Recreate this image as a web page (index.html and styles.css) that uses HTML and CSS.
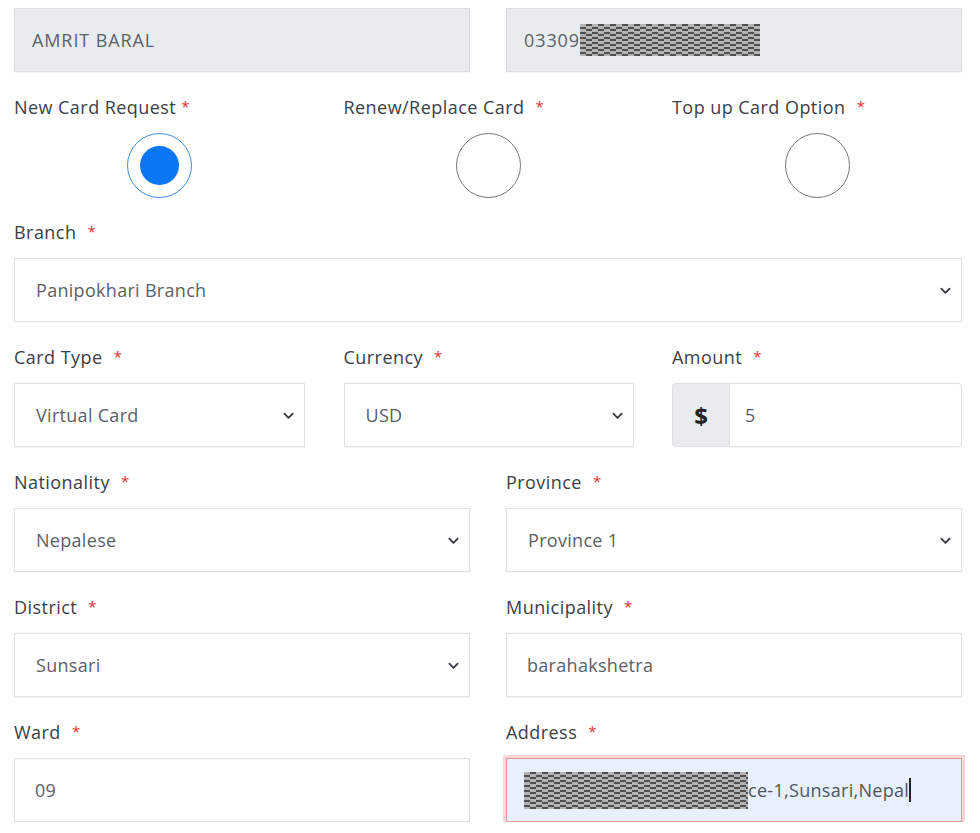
FILE: index.html
```html
<!DOCTYPE html>
<html lang="en">
<head>
<meta charset="utf-8">
<title>Card Request</title>
<link rel="stylesheet" href="styles.css">
</head>
<body>
<form class="form">
  <div class="row two">
    <div class="field"><div class="control readonly">AMRIT BARAL</div></div>
    <div class="field"><div class="control readonly">03309<span class="redact redact-phone"></span></div></div>
  </div>

  <div class="row three">
    <div class="field">
      <label class="label">New Card Request<span class="req tight">*</span></label>
      <div class="radio-wrap"><span class="radio checked"><span class="dot"></span></span></div>
    </div>
    <div class="field">
      <label class="label">Renew/Replace Card <span class="req">*</span></label>
      <div class="radio-wrap"><span class="radio"></span></div>
    </div>
    <div class="field">
      <label class="label">Top up Card Option <span class="req">*</span></label>
      <div class="radio-wrap"><span class="radio"></span></div>
    </div>
  </div>

  <div class="row one">
    <div class="field">
      <label class="label">Branch <span class="req">*</span></label>
      <div class="control select">Panipokhari Branch<svg class="chev" viewBox="0 0 12 8"><path d="M1.5 1.5 L6 6 L10.5 1.5"/></svg></div>
    </div>
  </div>

  <div class="row three">
    <div class="field">
      <label class="label">Card Type <span class="req">*</span></label>
      <div class="control select">Virtual Card<svg class="chev" viewBox="0 0 12 8"><path d="M1.5 1.5 L6 6 L10.5 1.5"/></svg></div>
    </div>
    <div class="field">
      <label class="label">Currency <span class="req">*</span></label>
      <div class="control select">USD<svg class="chev" viewBox="0 0 12 8"><path d="M1.5 1.5 L6 6 L10.5 1.5"/></svg></div>
    </div>
    <div class="field">
      <label class="label">Amount <span class="req">*</span></label>
      <div class="group">
        <span class="addon">$</span>
        <div class="control in-group">5</div>
      </div>
    </div>
  </div>

  <div class="row two">
    <div class="field">
      <label class="label">Nationality <span class="req">*</span></label>
      <div class="control select">Nepalese<svg class="chev" viewBox="0 0 12 8"><path d="M1.5 1.5 L6 6 L10.5 1.5"/></svg></div>
    </div>
    <div class="field">
      <label class="label">Province <span class="req">*</span></label>
      <div class="control select">Province 1<svg class="chev" viewBox="0 0 12 8"><path d="M1.5 1.5 L6 6 L10.5 1.5"/></svg></div>
    </div>
  </div>

  <div class="row two">
    <div class="field">
      <label class="label">District <span class="req">*</span></label>
      <div class="control select">Sunsari<svg class="chev" viewBox="0 0 12 8"><path d="M1.5 1.5 L6 6 L10.5 1.5"/></svg></div>
    </div>
    <div class="field">
      <label class="label">Municipality <span class="req">*</span></label>
      <div class="control">barahakshetra</div>
    </div>
  </div>

  <div class="row two">
    <div class="field">
      <label class="label">Ward <span class="req">*</span></label>
      <div class="control">09</div>
    </div>
    <div class="field">
      <label class="label">Address <span class="req">*</span></label>
      <div class="control focused"><span class="redact redact-addr"></span>ce-1,Sunsari,Nepal<span class="caret"></span></div>
    </div>
  </div>
</form>
</body>
</html>
```

FILE: styles.css
```css
* { box-sizing: border-box; }

html, body {
  margin: 0;
  padding: 0;
  background: #ffffff;
}

body {
  font-family: "Open Sans", "Noto Sans", sans-serif;
  color: #3b4148;
}

.form {
  width: 948px;
  margin-left: 14px;
  padding-top: 8px;
  display: flex;
  flex-direction: column;
  gap: 22px;
}

.row {
  display: grid;
}

.row.two {
  grid-template-columns: 456px 456px;
  column-gap: 36px;
}

.row.three {
  grid-template-columns: 291px 290px 290px;
  column-gap: 38px;
  justify-content: space-between;
}

.row.one {
  grid-template-columns: 1fr;
}

.field {
  display: flex;
  flex-direction: column;
  gap: 12px;
}

.label {
  font-size: 18px;
  line-height: 27px;
  height: 27px;
  margin-top: -1px;
  margin-bottom: 1px;
  letter-spacing: 0.45px;
  color: #3a4047;
  white-space: nowrap;
}

.req {
  color: #e0302f;
  margin-left: 6px;
  font-size: 15px;
  vertical-align: 2px;
}

.req.tight {
  margin-left: 5px;
}

.control {
  position: relative;
  height: 64px;
  border: 1px solid #dfe2e5;
  background: #ffffff;
  padding: 0 20px;
  display: flex;
  align-items: center;
  font-size: 18px;
  letter-spacing: 0.3px;
  color: #5b6168;
  box-shadow: 0 1px 1px rgba(0, 0, 0, 0.04);
}

.control.readonly {
  background: #e9ecef;
  padding-left: 17px;
  border-color: #dcdfe2;
  letter-spacing: 0.9px;
}

.control.select {
  padding-left: 21px;
}

.chev {
  position: absolute;
  right: 10px;
  top: 28px;
  width: 11px;
  height: 8px;
  fill: none;
  stroke: #343a40;
  stroke-width: 2;
  stroke-linecap: round;
  stroke-linejoin: round;
}

.group {
  display: flex;
  height: 64px;
}

.addon {
  width: 57px;
  flex: none;
  background: #e9ecef;
  border: 1px solid #dfe2e5;
  border-right: none;
  border-radius: 4px 0 0 4px;
  display: flex;
  align-items: center;
  justify-content: center;
  font-size: 24px;
  font-weight: 700;
  color: #222;
}

.control.in-group {
  flex: 1;
  padding-left: 15px;
  border-radius: 0 4px 4px 0;
}

.radio-wrap {
  display: flex;
  justify-content: center;
  height: 64px;
}

.radio {
  width: 65px;
  height: 65px;
  border-radius: 50%;
  border: 1.5px solid #777;
  background: #fff;
  display: flex;
  align-items: center;
  justify-content: center;
}

.radio.checked {
  border-color: #3a8ee8;
}

.dot {
  width: 39px;
  height: 39px;
  border-radius: 50%;
  background: #0c76f5;
}

.redact {
  display: inline-block;
  background-color: #8c8c8c;
  background-image: conic-gradient(#4f4f4f 25%, #b4b4b4 0 50%, #4f4f4f 0 75%, #b4b4b4 0);
  background-size: 12px 5px;
}

.redact-phone {
  width: 180px;
  height: 32px;
}

.redact-addr {
  width: 224px;
  height: 37px;
  margin-left: -1px;
}

.control.focused {
  background: #e8f0fe;
  border-color: #e09a9a;
  box-shadow: 0 0 0 3px #f8d7d9;
  padding-left: 18px;
  color: #4e5660;
}

.caret {
  display: inline-block;
  width: 1.5px;
  height: 24px;
  background: #222;
  margin-left: 0;
}
```
